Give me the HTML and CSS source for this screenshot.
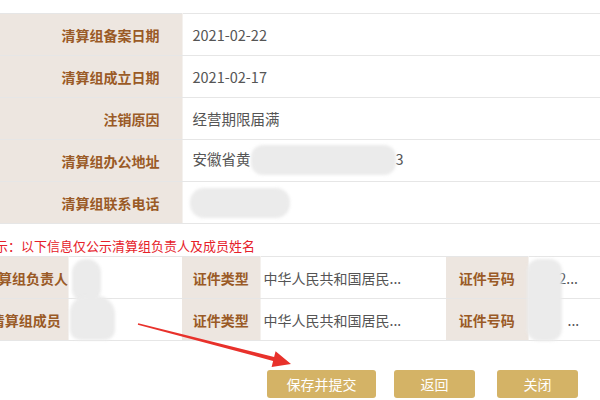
FILE: index.html
```html
<!DOCTYPE html>
<html lang="zh-CN">
<head>
<meta charset="utf-8">
<title>清算组信息</title>
<link rel="stylesheet" href="styles.css">
</head>
<body>
<div class="page">
  <table class="info">
    <tr><th>清算组备案日期</th><td>2021-02-22</td></tr>
    <tr><th>清算组成立日期</th><td>2021-02-17</td></tr>
    <tr><th>注销原因</th><td>经营期限届满</td></tr>
    <tr><th>清算组办公地址</th><td>安徽省黄<span class="blob addr"></span>3</td></tr>
    <tr><th>清算组联系电话</th><td><span class="blob phone"></span></td></tr>
  </table>
  <div class="notice">提示：以下信息仅公示清算组负责人及成员姓名</div>
  <div class="members">
    <table class="grid">
      <colgroup>
        <col class="c1"><col class="c2"><col class="c3"><col class="c4"><col class="c5"><col class="c6">
      </colgroup>
      <tr>
        <th>清算组负责人</th><td></td>
        <th>证件类型</th><td class="type">中华人民共和国居民...</td>
        <th>证件号码</th><td class="num">2...</td>
      </tr>
      <tr>
        <th>清算组成员</th><td></td>
        <th>证件类型</th><td class="type">中华人民共和国居民...</td>
        <th>证件号码</th><td class="num num2">...</td>
      </tr>
    </table>
    <div class="mask m-head"></div>
    <div class="mask m-body"></div>
    <div class="mask m-id"></div>
  </div>
  <div class="actions">
    <button class="btn wide">保存并提交</button>
    <button class="btn back">返回</button>
    <button class="btn close">关闭</button>
  </div>
  <svg class="arrow" width="600" height="400" viewBox="0 0 600 400">
    <polygon fill="#e8312b" points="138.2,323.3 274.1,357.1 275.6,351.3 291,364 271.6,367 273.1,360.9 137.8,324.7"/>
  </svg>
</div>
</body>
</html>
```
FILE: styles.css
```css
html, body {
  margin: 0;
  padding: 0;
  background: #ffffff;
  overflow: hidden;
}
.page {
  position: relative;
  width: 600px;
  height: 400px;
  font-family: "Noto Sans CJK SC", "Microsoft YaHei", sans-serif;
  font-size: 14px;
  color: #555;
  overflow: hidden;
}
.info {
  margin-top: 13px;
  width: 600px;
  border-collapse: collapse;
}
.info th, .info td {
  height: 41px;
  padding: 0;
  border-top: 1px solid #e6e6e6;
  border-bottom: 1px solid #e6e6e6;
}
.info th {
  width: 182px;
  background: #ede6e0;
  color: #9a5a26;
  font-weight: bold;
  text-align: right;
  padding-right: 22px;
  box-sizing: border-box;
  border-right: 1px solid #f4f1ee;
}
.info td {
  padding-left: 10px;
  text-align: left;
  color: #555;
  font-size: 14.5px;
}
.blob {
  display: inline-block;
  vertical-align: middle;
  background: #ebebeb;
  filter: blur(1.5px);
}
.addr {
  width: 145px;
  height: 30px;
  border-radius: 12px;
  margin-top: -2px;
}
.phone {
  width: 100px;
  height: 30px;
  border-radius: 14px;
  margin-left: -3px;
}
.notice {
  height: 32px;
  box-sizing: border-box;
  padding-top: 13px;
  line-height: 18px;
  margin-left: -18px;
  font-size: 13px;
  color: #e6212a;
  white-space: nowrap;
}
.members {
  position: relative;
}
.grid {
  margin-left: -16px;
  width: 616px;
  table-layout: fixed;
  border-collapse: collapse;
}
.c1 { width: 84px; }
.c2 { width: 114px; }
.c3 { width: 78px; }
.c4 { width: 186px; }
.c5 { width: 82px; }
.c6 { width: 72px; }
.grid th, .grid td {
  height: 41px;
  padding: 0;
  border-top: 1px solid #e6e6e6;
  border-bottom: 1px solid #e6e6e6;
  white-space: nowrap;
  overflow: hidden;
}
.grid th {
  background: #ede6e0;
  color: #9a5a26;
  font-weight: bold;
  text-align: center;
  border-right: 1px solid #f4f1ee;
}
.grid td {
  text-align: left;
  color: #555;
}
.grid .type {
  padding-left: 3px;
}
.grid .num {
  padding-left: 30px;
}
.grid .num2 {
  padding-left: 39px;
}
.mask {
  position: absolute;
  background: #ebebeb;
  filter: blur(1.5px);
}
.m-head {
  left: 72px;
  top: 3px;
  width: 29px;
  height: 44px;
  border-radius: 14px;
}
.m-body {
  left: 70px;
  top: 40px;
  width: 45px;
  height: 44px;
  border-radius: 16px 18px 10px 10px;
}
.m-id {
  left: 527px;
  top: 3px;
  width: 35px;
  height: 82px;
  border-radius: 12px;
}
.actions {
  display: flex;
  justify-content: flex-end;
  padding-right: 22px;
  margin-top: 29px;
}
.btn {
  height: 28px;
  width: 81px;
  padding: 0;
  border: none;
  border-radius: 3px;
  background: #d4b366;
  color: #ffffff;
  font-family: "Noto Sans CJK SC", "Microsoft YaHei", sans-serif;
  font-size: 14px;
  line-height: 28px;
}
.wide {
  width: 109px;
}
.back {
  margin-left: 18px;
}
.close {
  margin-left: 22px;
}
.arrow {
  position: absolute;
  left: 0;
  top: 0;
  pointer-events: none;
}
```
